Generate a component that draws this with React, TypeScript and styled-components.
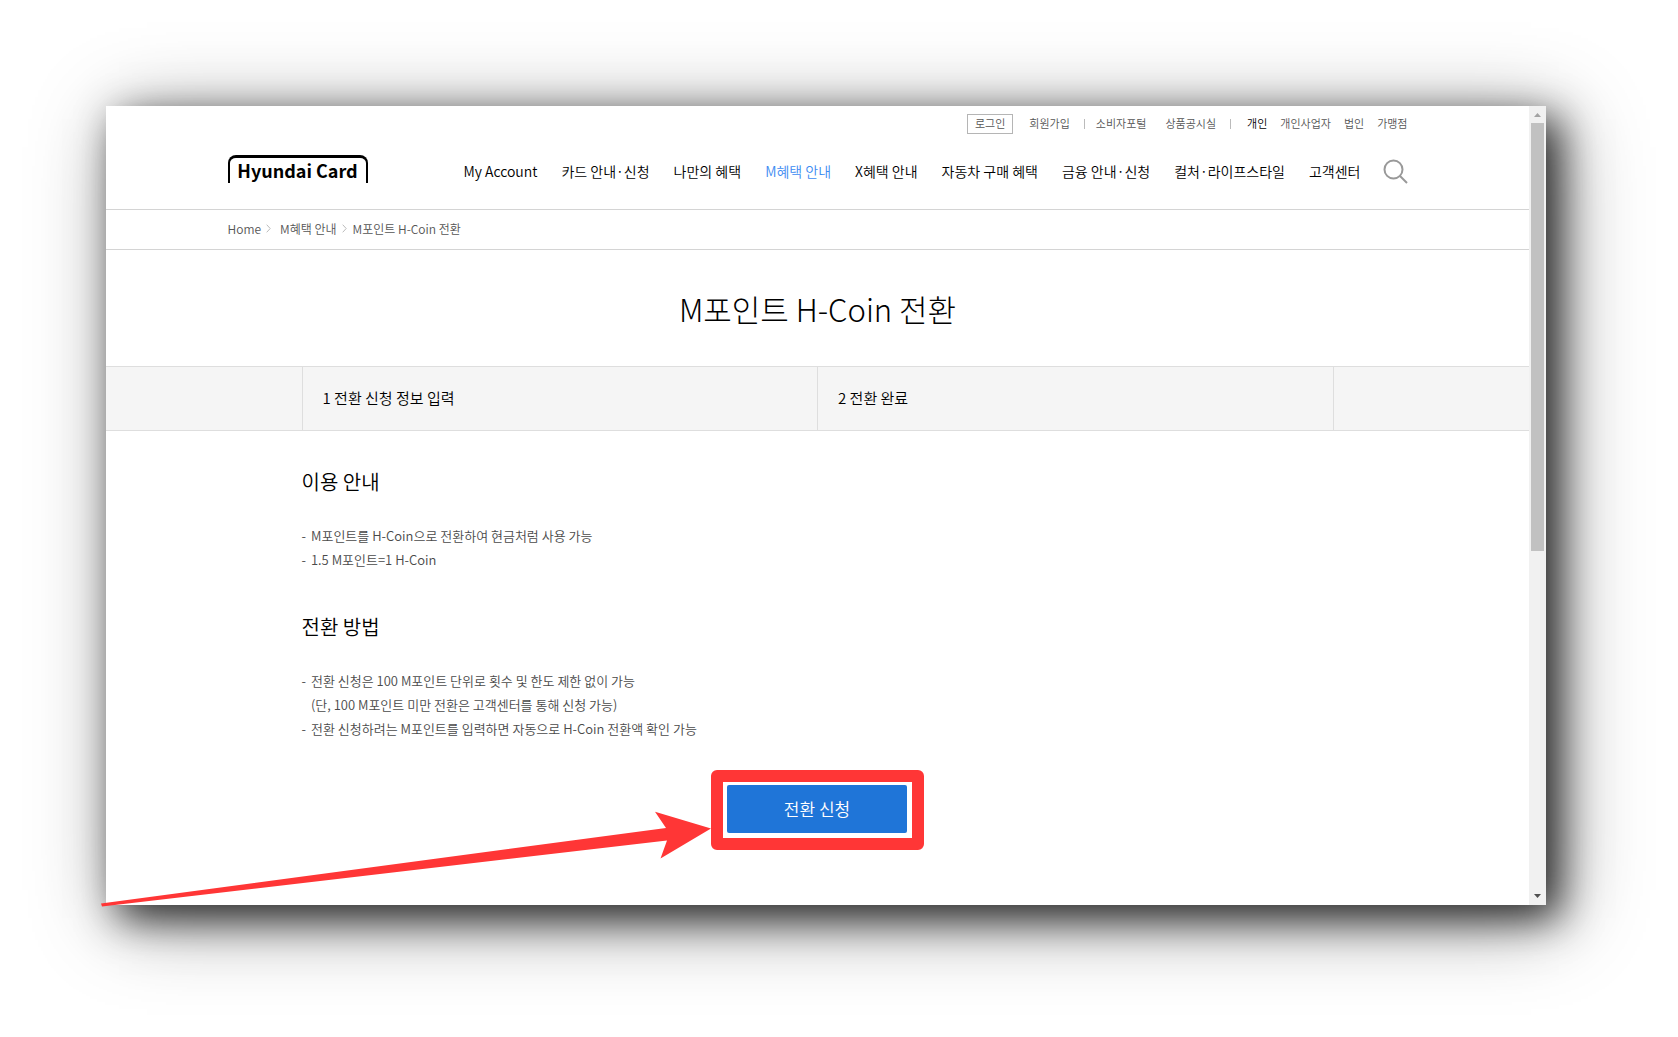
import React from "react";
import styled, { createGlobalStyle } from "styled-components";

const GlobalStyle = createGlobalStyle`
  *, *::before, *::after { box-sizing: border-box; }
  body {
    margin: 0;
    background: #fff;
    color: #000;
    font-family: "Noto Sans CJK KR", "Noto Sans", sans-serif;
    font-weight: 350;
  }
  h1, h2, p, ul, ol { margin: 0; padding: 0; font-weight: inherit; }
  ul, ol { list-style: none; }
  a { color: inherit; text-decoration: none; }
  button { font: inherit; padding: 0; border: 0; background: none; cursor: pointer; }
`;

const Stage = styled.div`
  display: flex;
  min-height: 100vh;
  padding: 106px 132px 132px 106px;
  overflow: hidden;
`;

const Window = styled.div`
  display: flex;
  flex: 1;
  min-width: 0;
  background: #fff;
  box-shadow:
    13px 13px 38px rgba(0, 0, 0, 0.78),
    13px 13px 80px rgba(0, 0, 0, 0.42);
`;

const Page = styled.div`
  flex: 1;
  min-width: 0;
`;

const Container = styled.div<{ $width: number }>`
  width: 100%;
  max-width: ${(p) => p.$width}px;
  margin: 0 auto;
`;

const Header = styled.header`
  padding: 8px 0 22px;
  border-bottom: 1px solid #d4d4d4;
`;

const Utility = styled.ul`
  display: flex;
  justify-content: flex-end;
  align-items: baseline;
  height: 20px;
  font-size: 11px;
  line-height: 16px;
  color: #555;
`;

const UtilityItem = styled.li<{ $gap: number; $active?: boolean }>`
  margin-left: ${(p) => p.$gap}px;
  color: ${(p) => (p.$active ? "#000" : "inherit")};
`;

const LoginLink = styled.a`
  display: block;
  padding: 0 7px 2px;
  border: 1px solid #b5b5b5;
`;

const Divider = styled.li`
  align-self: center;
  width: 1px;
  height: 10px;
  margin: 0 11px 0 14px;
  background: #bbb;
`;

const MainBar = styled.div`
  display: flex;
  align-items: center;
  height: 32px;
  margin-top: 21px;
`;

const Logo = styled.a`
  display: flex;
  align-self: flex-start;
  justify-content: center;
  width: 140px;
  height: 28px;
  border: solid #000;
  border-width: 3px 2px 0;
  border-radius: 8px 8px 0 0;
  font-size: 18px;
  font-weight: 700;
  line-height: 24px;
  white-space: nowrap;
`;

const Menu = styled.ul`
  display: flex;
  gap: 24px;
  margin-left: auto;
  font-size: 14px;
  line-height: 24px;
  white-space: nowrap;
`;

const MenuLink = styled.a<{ $active: boolean }>`
  color: ${(p) => (p.$active ? "#3d8bf2" : "#000")};
`;

const SearchButton = styled.button`
  display: flex;
  margin-left: 22px;
`;

const BreadcrumbBar = styled.nav`
  border-bottom: 1px solid #d4d4d4;
`;

const Crumbs = styled.ol`
  display: flex;
  align-items: center;
  height: 39px;
  padding-bottom: 2px;
  font-size: 12px;
  line-height: 20px;
  color: #555;
`;

const Crumb = styled.li<{ $gap: number }>`
  display: flex;
  align-items: center;
  gap: 5px;
  margin-right: ${(p) => p.$gap}px;
`;

const Title = styled.h1`
  padding: 37px 0 35px;
  font-size: 31px;
  font-weight: 300;
  line-height: 44px;
  text-align: center;
`;

const StepBar = styled.div`
  border: solid #dedede;
  border-width: 1px 0;
  background: #f5f5f5;
`;

const Steps = styled.ol`
  display: grid;
  grid-template-columns: 1fr 1fr;
  border-right: 1px solid #dedede;
  font-size: 15px;
  line-height: 61px;
`;

const Step = styled.li`
  padding: 0 20px 2px;
  border-left: 1px solid #dedede;
`;

const SectionTitle = styled.h2`
  padding-top: 36px;
  font-size: 20px;
  line-height: 30px;
`;

const Notes = styled.ul`
  padding: 27px 0 4px;
  font-size: 13px;
  line-height: 24px;
  color: #4a4a4a;
`;

const Note = styled.li`
  display: flex;
  gap: 5px;
  &::before { content: "-"; }
`;

const Actions = styled.div`
  display: flex;
  justify-content: center;
  padding: 25px 0 55px;
`;

const Highlight = styled.div`
  position: relative;
  padding: 3px 5px 5px 4px;
  border: 12px solid #ff3636;
  border-radius: 6px;
`;

const Pointer = styled.svg`
  position: absolute;
  top: 29px;
  right: calc(100% + 12px);
  pointer-events: none;
`;

const SubmitButton = styled.button`
  display: block;
  width: 180px;
  height: 48px;
  border-radius: 2px;
  background: #1f75d8;
  color: #fff;
  font-size: 17px;
  line-height: 24px;
`;

const ScrollRail = styled.div`
  display: flex;
  flex-direction: column;
  width: 17px;
  padding: 0 2px;
  background: #f1f1f1;
`;

const RailArrow = styled.svg`
  flex: none;
  display: block;
`;

const Track = styled.div`
  flex: 1;
`;

const Thumb = styled.div`
  height: 56%;
  background: #c1c1c1;
`;

const menu = [
  "My Account",
  "카드 안내·신청",
  "나만의 혜택",
  "M혜택 안내",
  "X혜택 안내",
  "자동차 구매 혜택",
  "금융 안내·신청",
  "컬처·라이프스타일",
  "고객센터",
];

const Chevron = () => (
  <svg width="5" height="9" viewBox="0 0 5 9" fill="none" stroke="#bbb" aria-hidden="true">
    <path d="M.7.7 4.2 4.5.7 8.3" />
  </svg>
);

function SiteHeader() {
  return (
    <Header>
      <Container $width={1180}>
        <Utility>
          <UtilityItem $gap={0}><LoginLink href="#login">로그인</LoginLink></UtilityItem>
          <UtilityItem $gap={16}><a href="#join">회원가입</a></UtilityItem>
          <Divider aria-hidden="true" />
          <UtilityItem $gap={0}><a href="#portal">소비자포털</a></UtilityItem>
          <UtilityItem $gap={19}><a href="#notice">상품공시실</a></UtilityItem>
          <Divider aria-hidden="true" />
          <UtilityItem $gap={5} $active><a href="#personal">개인</a></UtilityItem>
          <UtilityItem $gap={13}><a href="#business">개인사업자</a></UtilityItem>
          <UtilityItem $gap={13}><a href="#corporate">법인</a></UtilityItem>
          <UtilityItem $gap={13}><a href="#merchant">가맹점</a></UtilityItem>
        </Utility>
        <MainBar>
          <Logo href="#home">Hyundai Card</Logo>
          <Menu>
            {menu.map((label) => (
              <li key={label}>
                <MenuLink href="#menu" $active={label === "M혜택 안내"}>{label}</MenuLink>
              </li>
            ))}
          </Menu>
          <SearchButton type="button" aria-label="검색">
            <svg width="25" height="25" viewBox="0 0 25 25" fill="none" stroke="#999" strokeWidth="2">
              <circle cx="10.5" cy="10.5" r="9" />
              <path d="M17 17 24 24" />
            </svg>
          </SearchButton>
        </MainBar>
      </Container>
    </Header>
  );
}

export default function App() {
  return (
    <>
      <GlobalStyle />
      <Stage>
        <Window>
          <Page>
            <SiteHeader />
            <BreadcrumbBar>
              <Container $width={1180}>
                <Crumbs>
                  <Crumb $gap={9}><a href="#home">Home</a><Chevron /></Crumb>
                  <Crumb $gap={6}><a href="#benefit">M혜택 안내</a><Chevron /></Crumb>
                  <Crumb $gap={0}>M포인트 H-Coin 전환</Crumb>
                </Crumbs>
              </Container>
            </BreadcrumbBar>
            <main>
              <Title>M포인트 H-Coin 전환</Title>
              <StepBar>
                <Container $width={1032}>
                  <Steps>
                    <Step>1 전환 신청 정보 입력</Step>
                    <Step>2 전환 완료</Step>
                  </Steps>
                </Container>
              </StepBar>
              <Container $width={1032}>
                <SectionTitle>이용 안내</SectionTitle>
                <Notes>
                  <Note>M포인트를 H-Coin으로 전환하여 현금처럼 사용 가능</Note>
                  <Note>1.5 M포인트=1 H-Coin</Note>
                </Notes>
                <SectionTitle>전환 방법</SectionTitle>
                <Notes>
                  <Note>
                    <p>
                      전환 신청은 100 M포인트 단위로 횟수 및 한도 제한 없이 가능
                      <br />
                      (단, 100 M포인트 미만 전환은 고객센터를 통해 신청 가능)
                    </p>
                  </Note>
                  <Note>전환 신청하려는 M포인트를 입력하면 자동으로 H-Coin 전환액 확인 가능</Note>
                </Notes>
                <Actions>
                  <Highlight>
                    <Pointer width="610" height="96" viewBox="0 0 610 96" fill="#ff3636" aria-hidden="true">
                      <path d="M0 92.5 565 17 554 .7 610 17.5 559.500 47.500 566 29.500 1 95.500Z" />
                    </Pointer>
                    <SubmitButton type="button">전환 신청</SubmitButton>
                  </Highlight>
                </Actions>
              </Container>
            </main>
          </Page>
          <ScrollRail aria-hidden="true">
            <RailArrow width="13" height="17" viewBox="0 0 13 17" fill="#a3a3a3">
              <path d="M3 11h7L6.500 7Z" />
            </RailArrow>
            <Track><Thumb /></Track>
            <RailArrow width="13" height="17" viewBox="0 0 13 17" fill="#505050">
              <path d="M3 6h7L6.500 10Z" />
            </RailArrow>
          </ScrollRail>
        </Window>
      </Stage>
    </>
  );
}
